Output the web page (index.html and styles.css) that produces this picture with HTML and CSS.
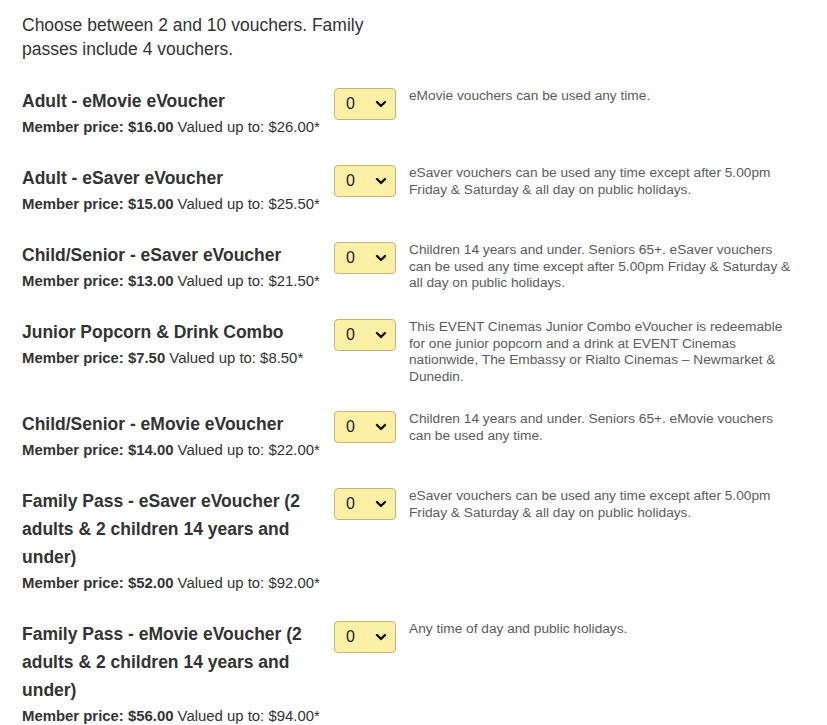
FILE: index.html
```html
<!DOCTYPE html>
<html lang="en">
<head>
    <meta charset="UTF-8">
    <title>eVouchers</title>
    <link rel="stylesheet" href="styles.css">
</head>
<body>
<div class="vouchers">
    <p class="intro">Choose between 2 and 10 vouchers. Family passes include 4 vouchers.</p>

    <div class="voucher">
        <div class="info">
            <h3>Adult - eMovie eVoucher</h3>
            <p class="price"><b>Member price: $16.00</b> Valued up to: $26.00*</p>
        </div>
        <div class="qty"><span>0</span><svg viewBox="0 0 12 8"><path d="M2 2l4 4 4-4"/></svg></div>
        <p class="desc">eMovie vouchers can be used any time.</p>
    </div>

    <div class="voucher">
        <div class="info">
            <h3>Adult - eSaver eVoucher</h3>
            <p class="price"><b>Member price: $15.00</b> Valued up to: $25.50*</p>
        </div>
        <div class="qty"><span>0</span><svg viewBox="0 0 12 8"><path d="M2 2l4 4 4-4"/></svg></div>
        <p class="desc">eSaver vouchers can be used any time except after 5.00pm Friday &amp; Saturday &amp; all day on public holidays.</p>
    </div>

    <div class="voucher">
        <div class="info">
            <h3>Child/Senior - eSaver eVoucher</h3>
            <p class="price"><b>Member price: $13.00</b> Valued up to: $21.50*</p>
        </div>
        <div class="qty"><span>0</span><svg viewBox="0 0 12 8"><path d="M2 2l4 4 4-4"/></svg></div>
        <p class="desc">Children 14 years and under. Seniors 65+. eSaver vouchers can be used any time except after 5.00pm Friday &amp; Saturday &amp; all day on public holidays.</p>
    </div>

    <div class="voucher">
        <div class="info">
            <h3>Junior Popcorn &amp; Drink Combo</h3>
            <p class="price"><b>Member price: $7.50</b> Valued up to: $8.50*</p>
        </div>
        <div class="qty"><span>0</span><svg viewBox="0 0 12 8"><path d="M2 2l4 4 4-4"/></svg></div>
        <p class="desc">This EVENT Cinemas Junior Combo eVoucher is redeemable for one junior popcorn and a drink at EVENT Cinemas nationwide, The Embassy or Rialto Cinemas – Newmarket &amp; Dunedin.</p>
    </div>

    <div class="voucher">
        <div class="info">
            <h3>Child/Senior - eMovie eVoucher</h3>
            <p class="price"><b>Member price: $14.00</b> Valued up to: $22.00*</p>
        </div>
        <div class="qty"><span>0</span><svg viewBox="0 0 12 8"><path d="M2 2l4 4 4-4"/></svg></div>
        <p class="desc">Children 14 years and under. Seniors 65+. eMovie vouchers can be used any time.</p>
    </div>

    <div class="voucher">
        <div class="info">
            <h3>Family Pass - eSaver eVoucher (2 adults &amp; 2 children 14 years and under)</h3>
            <p class="price"><b>Member price: $52.00</b> Valued up to: $92.00*</p>
        </div>
        <div class="qty"><span>0</span><svg viewBox="0 0 12 8"><path d="M2 2l4 4 4-4"/></svg></div>
        <p class="desc">eSaver vouchers can be used any time except after 5.00pm Friday &amp; Saturday &amp; all day on public holidays.</p>
    </div>

    <div class="voucher">
        <div class="info">
            <h3>Family Pass - eMovie eVoucher (2 adults &amp; 2 children 14 years and under)</h3>
            <p class="price"><b>Member price: $56.00</b> Valued up to: $94.00*</p>
        </div>
        <div class="qty"><span>0</span><svg viewBox="0 0 12 8"><path d="M2 2l4 4 4-4"/></svg></div>
        <p class="desc">Any time of day and public holidays.</p>
    </div>
</div>
</body>
</html>
```

FILE: styles.css
```css
body{
    margin: 0;
    background: #ffffff;
    font-family: "Liberation Sans", Arial, sans-serif;
    color: #333333;
}
.vouchers{
    padding: 13px 0 0 22px;
}
.intro{
    margin: 0 0 26px;
    width: 370px;
    font-size: 17.5px;
    line-height: 24px;
}
.voucher{
    display: flex;
    align-items: flex-start;
    margin-bottom: 25px;
}
.info{
    width: 300px;
    margin-right: 12px;
    flex-shrink: 0;
}
.info h3{
    margin: 0;
    font-size: 17.5px;
    line-height: 28px;
    font-weight: bold;
    color: #333333;
}
.price{
    margin: 0;
    font-size: 14.9px;
    line-height: 24px;
    color: #333333;
}
.qty{
    box-sizing: border-box;
    width: 62px;
    height: 32px;
    margin-top: 1px;
    flex-shrink: 0;
    display: flex;
    align-items: center;
    justify-content: space-between;
    padding: 0 8px 0 11px;
    background: #fcefa6;
    border: 1px solid #c8b37a;
    border-radius: 4px;
    font-size: 16px;
    color: #222222;
}
.qty svg{
    width: 12px;
    height: 8px;
    fill: none;
    stroke: #111111;
    stroke-width: 2.4;
    stroke-linecap: round;
    stroke-linejoin: round;
}
.desc{
    margin: 1px 0 0 13px;
    width: 388px;
    font-size: 13.7px;
    line-height: 16.5px;
    color: #5c5c5c;
}
```
